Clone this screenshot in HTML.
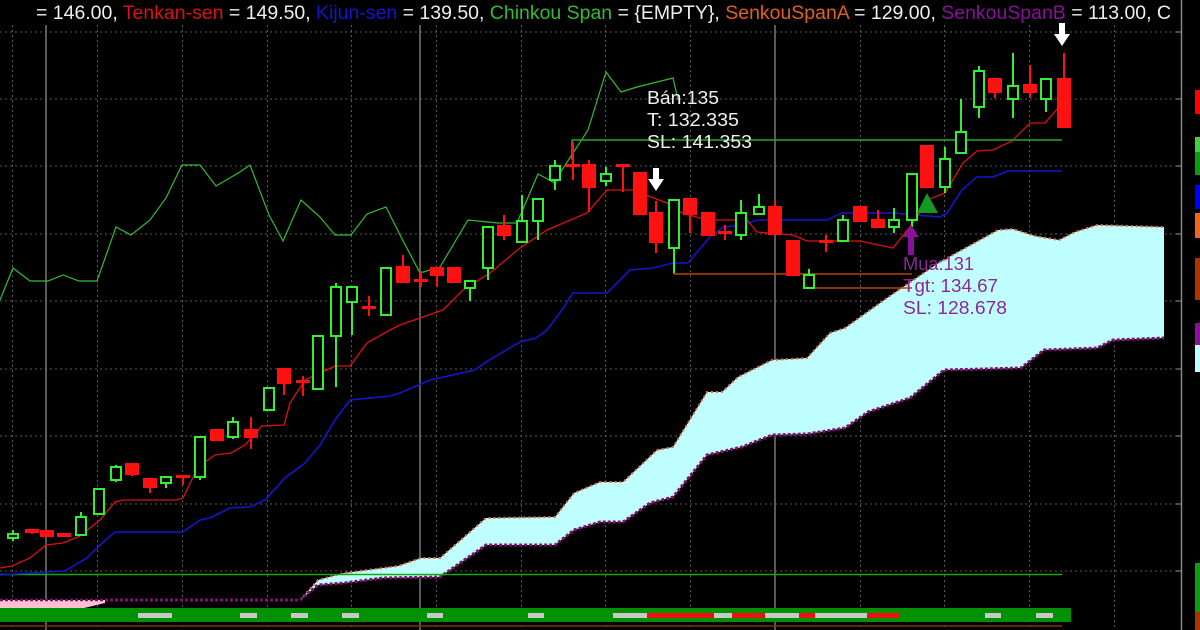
<!DOCTYPE html>
<html><head><meta charset="utf-8"><style>
html,body{margin:0;padding:0;background:#000;}
svg{display:block}
text{font-family:"Liberation Sans",sans-serif;}
</style></head><body>
<svg width="1200" height="630" viewBox="0 0 1200 630" xmlns="http://www.w3.org/2000/svg">
<rect width="1200" height="630" fill="#000"/>
<g stroke="#5a5a5a" stroke-width="1" stroke-dasharray="2 3">
<line x1="0" y1="32" x2="1176" y2="32"/><line x1="0" y1="99" x2="1176" y2="99"/>
<line x1="0" y1="166" x2="1176" y2="166"/><line x1="0" y1="234" x2="1176" y2="234"/>
<line x1="0" y1="301" x2="1176" y2="301"/><line x1="0" y1="369" x2="1176" y2="369"/>
<line x1="0" y1="436" x2="1176" y2="436"/><line x1="0" y1="504" x2="1176" y2="504"/>
<line x1="0" y1="571" x2="1176" y2="571"/>
</g>
<g stroke="#5a5a5a" stroke-width="1" stroke-dasharray="2 3">
<line x1="12.5" y1="25" x2="12.5" y2="630"/><line x1="97.5" y1="25" x2="97.5" y2="630"/>
<line x1="182.5" y1="25" x2="182.5" y2="630"/><line x1="267.5" y1="25" x2="267.5" y2="630"/>
<line x1="351.5" y1="25" x2="351.5" y2="630"/><line x1="436.5" y1="25" x2="436.5" y2="630"/>
<line x1="521.5" y1="25" x2="521.5" y2="630"/><line x1="605.5" y1="25" x2="605.5" y2="630"/>
<line x1="690.5" y1="25" x2="690.5" y2="630"/><line x1="860.5" y1="25" x2="860.5" y2="630"/>
<line x1="944.5" y1="25" x2="944.5" y2="630"/><line x1="1029.5" y1="25" x2="1029.5" y2="630"/>
<line x1="1114.5" y1="25" x2="1114.5" y2="630"/>
</g>
<g stroke="#777" stroke-width="1.5">
<line x1="46" y1="25" x2="46" y2="630"/><line x1="420" y1="25" x2="420" y2="630"/><line x1="775" y1="25" x2="775" y2="630"/>
</g>
<line x1="1181.5" y1="0" x2="1181.5" y2="630" stroke="#888" stroke-width="1.5"/>
<g stroke="#999" stroke-width="1">
<line x1="1176" y1="32" x2="1181" y2="32"/><line x1="1176" y1="99" x2="1181" y2="99"/><line x1="1176" y1="166" x2="1181" y2="166"/><line x1="1176" y1="234" x2="1181" y2="234"/><line x1="1176" y1="301" x2="1181" y2="301"/><line x1="1176" y1="369" x2="1181" y2="369"/><line x1="1176" y1="436" x2="1181" y2="436"/><line x1="1176" y1="504" x2="1181" y2="504"/><line x1="1176" y1="571" x2="1181" y2="571"/>
</g>
<rect x="1195" y="90" width="5" height="24" fill="#ff0000"/>
<rect x="1195" y="137" width="5" height="15" fill="#44cc44"/>
<rect x="1195" y="152" width="5" height="23" fill="#119911"/>
<rect x="1195" y="185" width="5" height="24" fill="#0000ee"/>
<rect x="1195" y="213" width="5" height="25" fill="#ee6622"/>
<rect x="1195" y="258" width="5" height="42" fill="#aa3300"/>
<rect x="1195" y="323" width="5" height="22" fill="#881199"/>
<rect x="1195" y="345" width="5" height="27" fill="#c0ffff"/>
<rect x="1195" y="563" width="5" height="49" fill="#119911"/>
<rect x="1195" y="612" width="5" height="18" fill="#aa3300"/>

<polygon points="0,600 105,600 105,603 80,609 60,612 40,608 0,608" fill="#ffc0d0"/>
<polyline points="0,600 105,600" stroke="#801070" stroke-width="2.5" stroke-dasharray="3 2" fill="none"/>
<polygon fill="#c0ffff" points="105,600 300,600 318,580 344,573 398,566 421,558 440,558 486,518 555,517 574,493 600,482 623,482 657,450 673,447 707,392 722,392 738,377 772,360 807,358 830,333 845,328 887,298 940,262 998,230 1013,229 1035,236 1059,240 1075,232 1097,225 1164,227 1164,338 1113,340 1097,348 1044,350 1021,368 944,370 910,398 868,412 845,428 807,434 772,435 742,447 707,455 673,497 650,503 623,522 600,522 574,530 555,545 486,545 440,577 383,578 344,583 318,585 300,600"/>
<polyline fill="none" stroke="#e07040" stroke-width="2" stroke-dasharray="2 3" points="300,600 318,580 344,573 398,566 421,558 440,558 486,518 555,517 574,493 600,482 623,482 657,450 673,447 707,392 722,392 738,377 772,360 807,358 830,333 845,328 887,298 940,262 998,230 1013,229 1035,236 1059,240 1075,232 1097,225 1164,227"/>
<polyline fill="none" stroke="#801070" stroke-width="3" stroke-dasharray="3 2" points="105,600 300,600 318,585 344,583 383,578 440,577 486,545 555,545 574,530 600,522 623,522 650,503 673,497 707,455 742,447 772,435 807,434 845,428 868,412 910,398 944,370 1021,368 1044,350 1097,348 1113,340 1164,338"/>

<line x1="0" y1="574.5" x2="1062" y2="574.5" stroke="#11aa11" stroke-width="1.5"/>
<rect x="0" y="608" width="1071" height="14" fill="#009000"/>
<g fill="#c8c8c8">
<rect x="138" y="613" width="34" height="5"/><rect x="240" y="613" width="17" height="5"/><rect x="291" y="613" width="17" height="5"/><rect x="342" y="613" width="17" height="5"/><rect x="427" y="613" width="16" height="5"/><rect x="528" y="613" width="16" height="5"/><rect x="613" y="613" width="34" height="5"/><rect x="714" y="613" width="18" height="5"/><rect x="765" y="613" width="34" height="5"/><rect x="815" y="613" width="52" height="5"/><rect x="985" y="613" width="16" height="5"/><rect x="1036" y="613" width="17" height="5"/>
</g>
<g fill="#ee1111">
<rect x="647" y="613" width="67" height="5"/><rect x="732" y="613" width="33" height="5"/><rect x="799" y="613" width="16" height="5"/><rect x="867" y="613" width="33" height="5"/>
</g>
<line x1="0" y1="626" x2="1062" y2="626" stroke="#7a3010" stroke-width="1.5"/>

<polyline fill="none" stroke="#33bb33" stroke-width="1.2" points="0,300 13,268 30,281 48,281 63,275 79,281 97,281 116,227 131,235 150,220 166,198 182,165 200,165 216,186 240,172 250,165 269,215 283,241 301,200 320,217 335,235 351,235 367,214 386,207 400,235 420,273 440,267 468,220 498,223 517,223 538,174 555,183 560,173 588,130 606,72 621,92 637,87 673,78 678,100"/>
<polyline fill="none" stroke="#1515d0" stroke-width="1.6" points="0,575 30,573 65,571 87,558 100,545 115,532 183,532 200,520 210,518 230,508 250,507 265,500 285,478 305,463 320,445 335,420 350,400 390,396 400,393 430,380 475,370 486,362 520,342 536,338 547,330 562,310 573,293 607,293 630,270 653,268 673,263 688,263 710,237 723,227 743,225 757,220 827,220 842,213 893,213 940,217 947,213 962,190 977,177 993,177 1008,171 1062,171"/>
<polyline fill="none" stroke="#dd1111" stroke-width="1.3" points="0,568 12,566 30,558 46,545 63,543 80,536 100,520 115,502 123,500 176,500 183,498 198,467 215,455 231,453 245,445 262,426 284,425 290,403 305,380 335,366 350,366 367,343 390,330 400,325 420,318 443,310 463,290 490,273 520,248 547,230 587,213 607,190 633,190 667,203 682,213 700,218 717,220 747,220 757,232 793,235 807,241 860,241 893,248 913,223 927,200 945,193 963,163 977,151 993,150 1012,141 1030,123 1045,123 1057,109 1062,107"/>

<polyline fill="none" stroke="#22aa22" stroke-width="1.5" points="572,160 572,140 1062,140"/>
<line x1="673" y1="274" x2="912" y2="274" stroke="#b84010" stroke-width="1.5"/>
<line x1="814" y1="288" x2="912" y2="288" stroke="#b84010" stroke-width="1.5"/>

<g stroke-width="2">
<g stroke="#ff1111" fill="#ff1111">
<line x1="32" y1="529" x2="32" y2="534"/><rect x="26" y="530" width="12" height="2"/>
<rect x="41" y="531" width="12" height="5"/>
<rect x="58" y="534" width="12" height="2"/>
<line x1="132" y1="464" x2="132" y2="476"/><rect x="126" y="464" width="12" height="10"/>
<line x1="150" y1="479" x2="150" y2="493"/><rect x="144" y="479" width="12" height="8"/>
<line x1="183" y1="476" x2="183" y2="485"/><rect x="177" y="476" width="12" height="1"/>
<rect x="211" y="430" width="12" height="10"/>
<line x1="251" y1="417" x2="251" y2="449"/><rect x="245" y="430" width="12" height="7"/>
<line x1="284" y1="369" x2="284" y2="395"/><rect x="278" y="369" width="12" height="14"/>
<line x1="303" y1="376" x2="303" y2="396"/><rect x="297" y="381" width="12" height="1"/>
<line x1="369" y1="296" x2="369" y2="316"/><rect x="363" y="307" width="12" height="1"/>
<line x1="403" y1="255" x2="403" y2="282"/><rect x="397" y="267" width="12" height="15"/>
<line x1="421" y1="271" x2="421" y2="287"/><rect x="415" y="280" width="12" height="1"/>
<line x1="437" y1="268" x2="437" y2="287"/><rect x="431" y="268" width="12" height="7"/>
<rect x="448" y="268" width="12" height="14"/>
<line x1="504" y1="215" x2="504" y2="240"/><rect x="498" y="226" width="12" height="9"/>
<line x1="573" y1="142" x2="573" y2="180"/><rect x="567" y="165" width="12" height="1"/>
<line x1="589" y1="160" x2="589" y2="212"/><rect x="583" y="165" width="12" height="22"/>
<line x1="623" y1="165" x2="623" y2="192"/><rect x="617" y="165" width="12" height="1"/>
<rect x="634" y="173" width="12" height="41"/>
<line x1="656" y1="201" x2="656" y2="253"/><rect x="650" y="213" width="12" height="29"/>
<line x1="690" y1="199" x2="690" y2="233"/><rect x="684" y="199" width="12" height="15"/>
<rect x="702" y="213" width="12" height="22"/>
<line x1="725" y1="225" x2="725" y2="240"/><rect x="719" y="232" width="12" height="1"/>
<line x1="775" y1="200" x2="775" y2="234"/><rect x="769" y="207" width="12" height="27"/>
<rect x="787" y="241" width="12" height="34"/>
<line x1="826" y1="235" x2="826" y2="252"/><rect x="820" y="241" width="12" height="1"/>
<rect x="854" y="207" width="12" height="14"/>
<line x1="878" y1="210" x2="878" y2="227"/><rect x="872" y="220" width="12" height="7"/>
<rect x="921" y="146" width="12" height="41"/>
<line x1="995" y1="79" x2="995" y2="98"/><rect x="989" y="79" width="12" height="13"/>
<line x1="1030" y1="65" x2="1030" y2="98"/><rect x="1024" y="85" width="12" height="7"/>
<line x1="1064" y1="53" x2="1064" y2="127"/><rect x="1058" y="79" width="12" height="48"/>
</g>
<g stroke="#33ee33" fill="#000">
<line x1="13" y1="530" x2="13" y2="541"/><rect x="8" y="534" width="10" height="4"/>
<line x1="81" y1="512" x2="81" y2="535"/><rect x="76" y="517" width="10" height="18"/>
<rect x="94" y="489" width="10" height="25"/>
<line x1="116" y1="465" x2="116" y2="482"/><rect x="111" y="467" width="10" height="13"/>
<line x1="166" y1="477" x2="166" y2="488"/><rect x="161" y="477" width="10" height="6"/>
<line x1="200" y1="437" x2="200" y2="480"/><rect x="195" y="437" width="10" height="40"/>
<line x1="233" y1="417" x2="233" y2="439"/><rect x="228" y="422" width="10" height="15"/>
<rect x="264" y="388" width="10" height="22"/>
<rect x="313" y="336" width="10" height="53"/>
<line x1="336" y1="283" x2="336" y2="387"/><rect x="331" y="287" width="10" height="49"/>
<line x1="352" y1="287" x2="352" y2="335"/><rect x="347" y="287" width="10" height="15"/>
<rect x="381" y="268" width="10" height="47"/>
<line x1="470" y1="281" x2="470" y2="301"/><rect x="465" y="281" width="10" height="7"/>
<line x1="488" y1="227" x2="488" y2="280"/><rect x="483" y="227" width="10" height="41"/>
<line x1="522" y1="195" x2="522" y2="242"/><rect x="517" y="221" width="10" height="21"/>
<line x1="538" y1="199" x2="538" y2="240"/><rect x="533" y="199" width="10" height="22"/>
<line x1="555" y1="160" x2="555" y2="190"/><rect x="550" y="166" width="10" height="14"/>
<line x1="606" y1="167" x2="606" y2="186"/><rect x="601" y="174" width="10" height="7"/>
<line x1="674" y1="200" x2="674" y2="273"/><rect x="669" y="200" width="10" height="48"/>
<line x1="741" y1="200" x2="741" y2="240"/><rect x="736" y="213" width="10" height="22"/>
<line x1="759" y1="194" x2="759" y2="214"/><rect x="754" y="207" width="10" height="7"/>
<line x1="809" y1="269" x2="809" y2="288"/><rect x="804" y="275" width="10" height="13"/>
<line x1="843" y1="215" x2="843" y2="241"/><rect x="838" y="220" width="10" height="21"/>
<line x1="894" y1="208" x2="894" y2="233"/><rect x="889" y="220" width="10" height="7"/>
<line x1="912" y1="174" x2="912" y2="227"/><rect x="907" y="174" width="10" height="46"/>
<line x1="945" y1="147" x2="945" y2="193"/><rect x="940" y="159" width="10" height="28"/>
<line x1="961" y1="99" x2="961" y2="153"/><rect x="956" y="132" width="10" height="21"/>
<line x1="979" y1="66" x2="979" y2="118"/><rect x="974" y="71" width="10" height="36"/>
<line x1="1013" y1="53" x2="1013" y2="118"/><rect x="1008" y="86" width="10" height="13"/>
<line x1="1046" y1="79" x2="1046" y2="112"/><rect x="1041" y="79" width="10" height="20"/>
</g>
</g>

<polygon points="927,193 917,213 938,213" fill="#119922"/>
<g fill="#fff">
<rect x="653" y="168" width="6" height="12"/><polygon points="648,179 664,179 656,191"/>
<rect x="1059" y="23" width="6" height="12"/><polygon points="1054,34 1070,34 1062,46"/>
</g>
<g fill="#881199">
<rect x="908" y="236" width="6" height="19"/><polygon points="903,237 919,237 911,225"/>
</g>

<g font-size="18" fill="#f0f0f0">
<text x="647" y="104" textLength="72" lengthAdjust="spacingAndGlyphs">Bán:135</text>
<text x="647" y="126" textLength="92" lengthAdjust="spacingAndGlyphs">T: 132.335</text>
<text x="647" y="148" textLength="105" lengthAdjust="spacingAndGlyphs">SL: 141.353</text>
</g>
<g font-size="18" fill="#8a2a9a">
<text x="903" y="270" textLength="71" lengthAdjust="spacingAndGlyphs">Mua:131</text>
<text x="903" y="292" textLength="95" lengthAdjust="spacingAndGlyphs">Tgt: 134.67</text>
<text x="903" y="314" textLength="104" lengthAdjust="spacingAndGlyphs">SL: 128.678</text>
</g>

<text x="36" y="19" font-size="19" fill="#eeeeee" textLength="1135" lengthAdjust="spacingAndGlyphs">= 146.00, <tspan fill="#dd1111">Tenkan-sen</tspan> = 149.50, <tspan fill="#1515d0">Kijun-sen</tspan> = 139.50, <tspan fill="#33bb33">Chinkou Span</tspan> = {EMPTY}, <tspan fill="#e06020">SenkouSpanA</tspan> = 129.00, <tspan fill="#881199">SenkouSpanB</tspan> = 113.00, C</text>
</svg>
</body></html>
